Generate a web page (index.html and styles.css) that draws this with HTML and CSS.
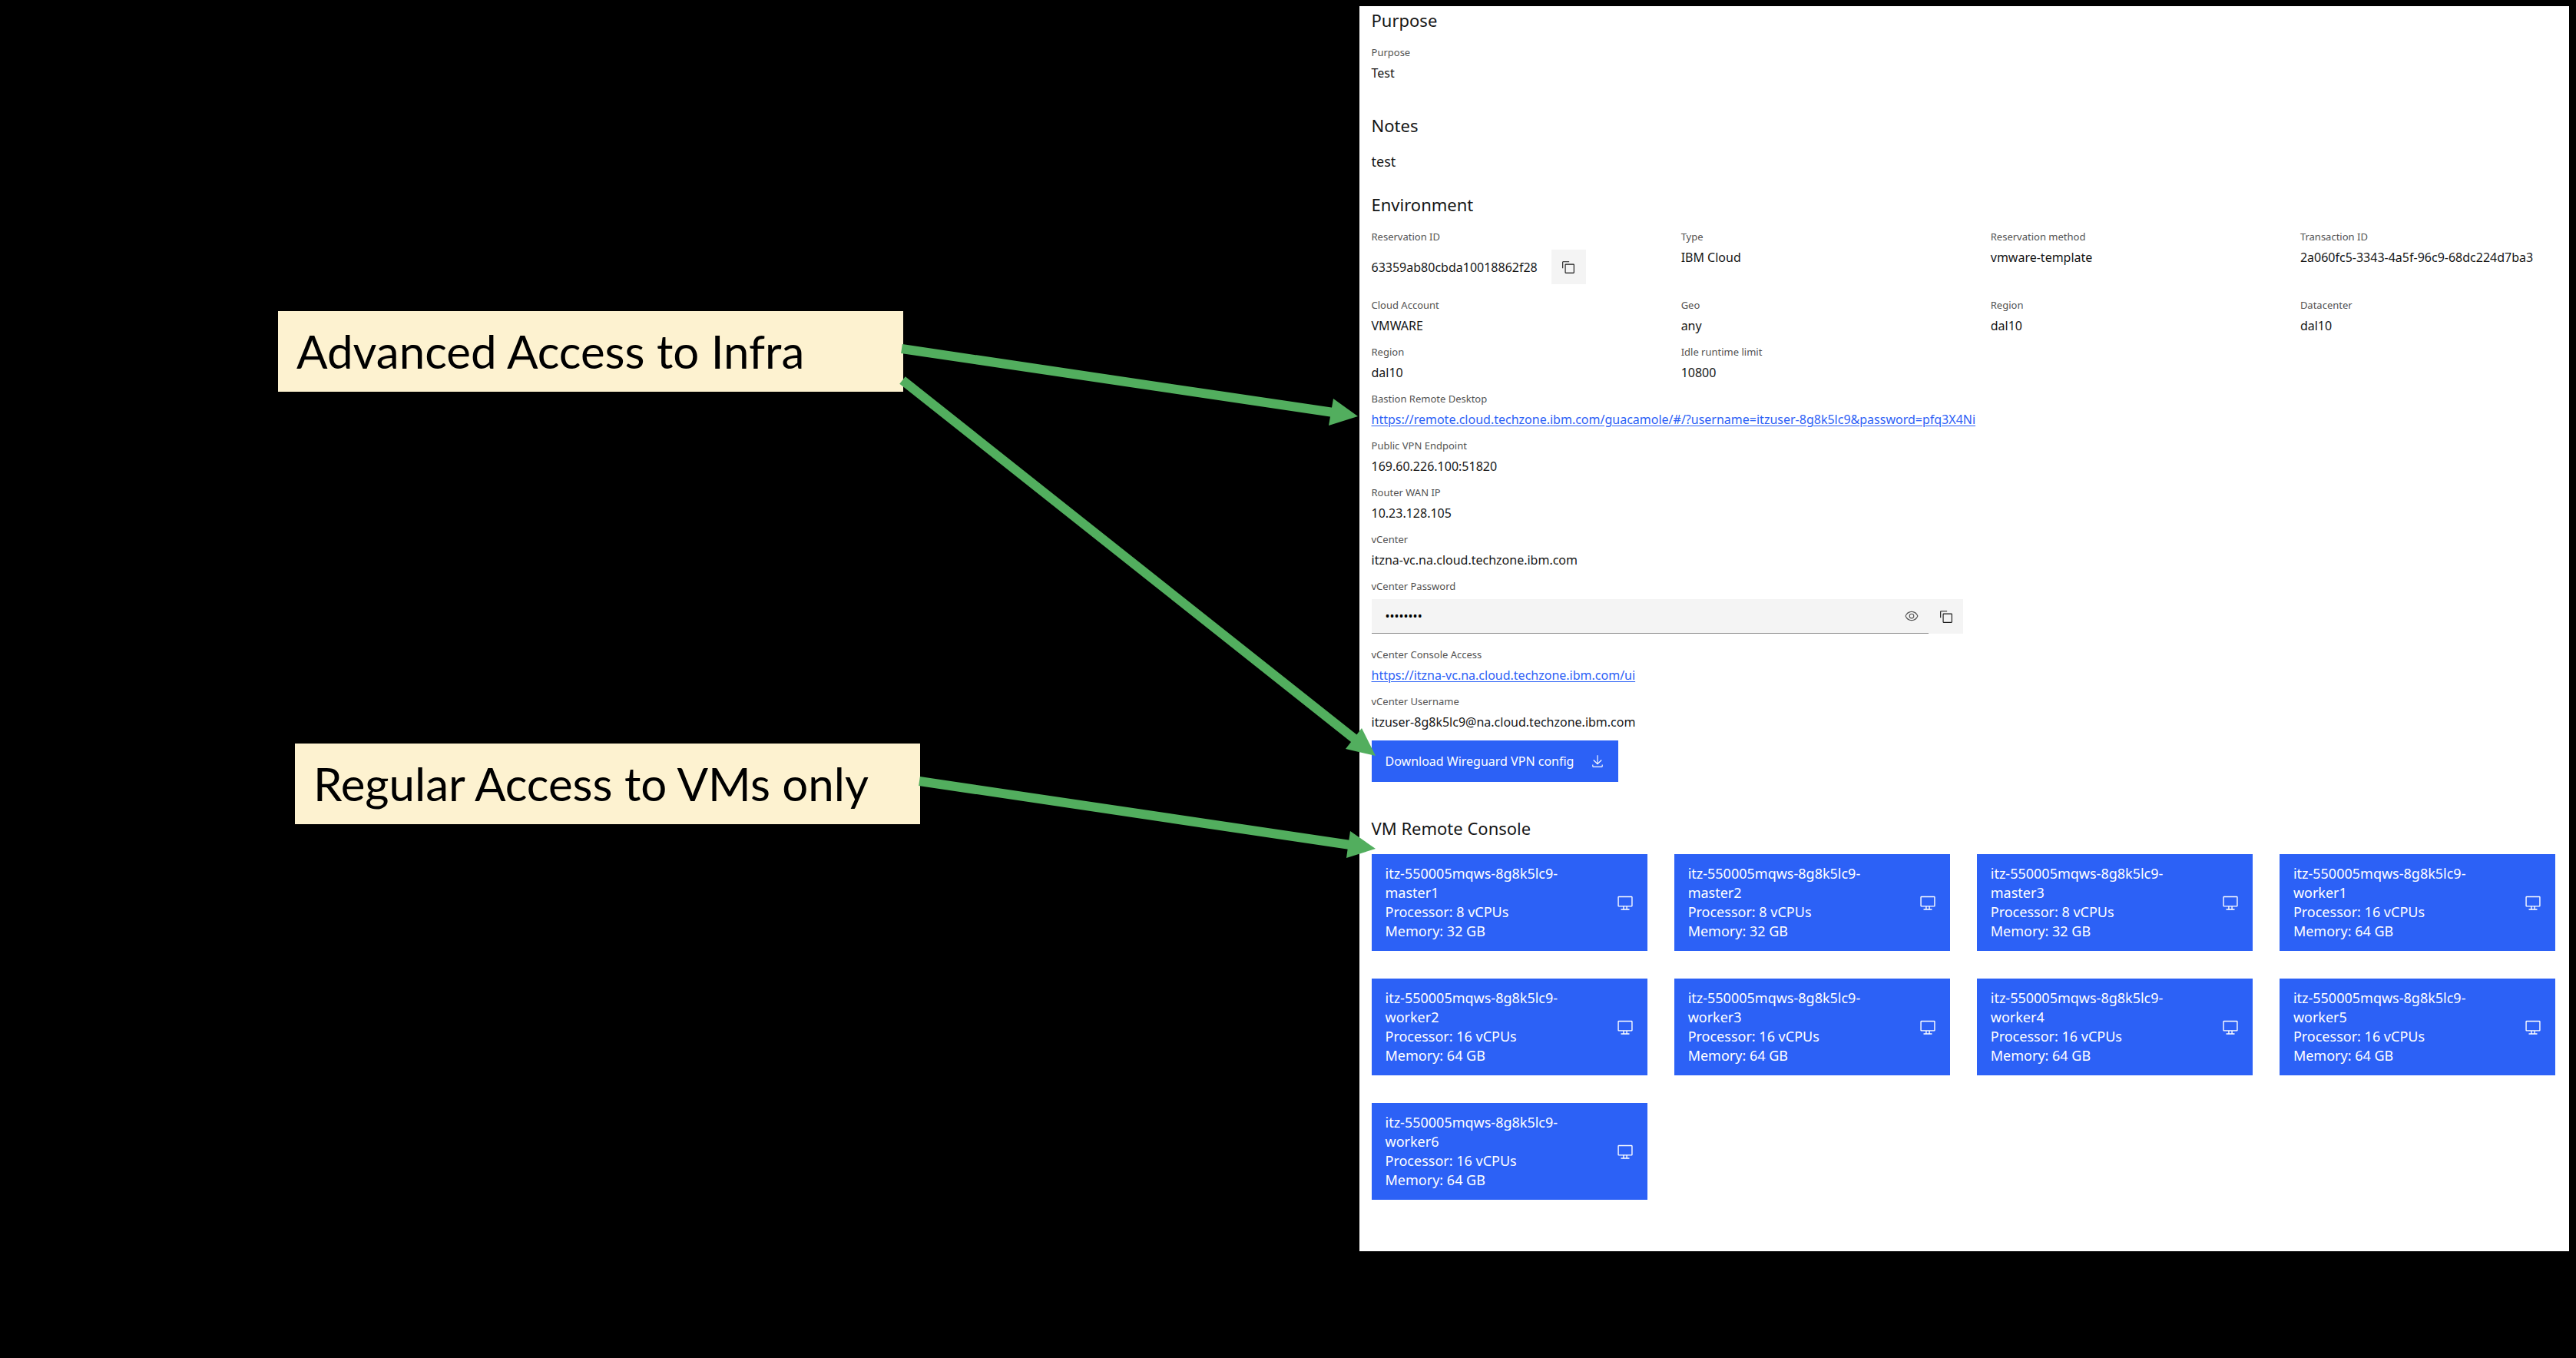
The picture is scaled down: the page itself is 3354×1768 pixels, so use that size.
FILE: index.html
```html
<!DOCTYPE html>
<html lang="en">
<head>
<meta charset="utf-8">
<title>Environment access</title>
<link rel="stylesheet" href="styles.css">
</head>
<body>
<svg class="sprite" aria-hidden="true">
  <symbol id="copy" viewBox="0 0 32 32"><path d="M28,10V28H10V10H28m0-2H10a2,2,0,0,0-2,2V28a2,2,0,0,0,2,2H28a2,2,0,0,0,2-2V10a2,2,0,0,0-2-2Z"/><path d="M4,18H2V4A2,2,0,0,1,4,2H18V4H4Z"/></symbol>
  <symbol id="view" viewBox="0 0 32 32"><path d="M30.94,15.66A16.69,16.69,0,0,0,16,5,16.69,16.69,0,0,0,1.06,15.66a1,1,0,0,0,0,.68A16.69,16.69,0,0,0,16,27,16.69,16.69,0,0,0,30.94,16.34,1,1,0,0,0,30.94,15.66ZM16,25c-5.3,0-10.9-3.93-12.93-9C5.1,10.93,10.7,7,16,7s10.9,3.93,12.93,9C26.9,21.07,21.3,25,16,25Z"/><path d="M16,10a6,6,0,1,0,6,6A6,6,0,0,0,16,10Zm0,10a4,4,0,1,1,4-4A4,4,0,0,1,16,20Z"/></symbol>
  <symbol id="download" viewBox="0 0 32 32"><path d="M26,24v4H6V24H4v4a2,2,0,0,0,2,2H26a2,2,0,0,0,2-2V24Z"/><path d="M26,14l-1.41-1.41L17,20.17V2H15V20.17L7.41,12.59,6,14,16,24,26,14Z"/></symbol>
  <symbol id="screen" viewBox="0 0 32 32"><path d="M28,4H4A2,2,0,0,0,2,6V22a2,2,0,0,0,2,2h8v4H8v2H24V28H20V24h8a2,2,0,0,0,2-2V6A2,2,0,0,0,28,4ZM18,28H14V24h4Zm10-6H4V6H28Z"/></symbol>
</svg>
<main class="slide">
  <aside class="callouts">
    <p class="callout callout-infra">Advanced Access to Infra</p>
    <p class="callout callout-vms">Regular Access to VMs only</p>
  </aside>
  <article class="panel">
    <section class="purpose">
      <h2>Purpose</h2>
      <dl class="details"><div><dt>Purpose</dt><dd>Test</dd></div></dl>
    </section>
    <section class="notes">
      <h2>Notes</h2>
      <p>test</p>
    </section>
    <section class="environment">
      <h2>Environment</h2>
      <dl class="details">
        <div><dt>Reservation ID</dt><dd class="copyable">63359ab80cbda10018862f28<button class="icon-button" type="button" aria-label="Copy reservation ID"><svg class="icon"><use href="#copy"/></svg></button></dd></div>
        <div><dt>Type</dt><dd>IBM Cloud</dd></div>
        <div><dt>Reservation method</dt><dd>vmware-template</dd></div>
        <div><dt>Transaction ID</dt><dd>2a060fc5-3343-4a5f-96c9-68dc224d7ba3</dd></div>
        <div><dt>Cloud Account</dt><dd>VMWARE</dd></div>
        <div><dt>Geo</dt><dd>any</dd></div>
        <div><dt>Region</dt><dd>dal10</dd></div>
        <div><dt>Datacenter</dt><dd>dal10</dd></div>
        <div><dt>Region</dt><dd>dal10</dd></div>
        <div><dt>Idle runtime limit</dt><dd>10800</dd></div>
        <div class="wide"><dt>Bastion Remote Desktop</dt><dd><a href="https://remote.cloud.techzone.ibm.com/guacamole/#/?username=itzuser-8g8k5lc9&amp;password=pfq3X4Ni">https://remote.cloud.techzone.ibm.com/guacamole/#/?username=itzuser-8g8k5lc9&amp;password=pfq3X4Ni</a></dd></div>
        <div class="wide"><dt>Public VPN Endpoint</dt><dd>169.60.226.100:51820</dd></div>
        <div class="wide"><dt>Router WAN IP</dt><dd>10.23.128.105</dd></div>
        <div class="wide"><dt>vCenter</dt><dd>itzna-vc.na.cloud.techzone.ibm.com</dd></div>
        <div class="wide"><dt><label for="vcenter-password">vCenter Password</label></dt><dd class="password"><span class="password-field"><input id="vcenter-password" type="password" value="password" readonly><button class="icon-button" type="button" aria-label="Show password"><svg class="icon"><use href="#view"/></svg></button></span><button class="icon-button" type="button" aria-label="Copy password"><svg class="icon"><use href="#copy"/></svg></button></dd></div>
        <div class="wide"><dt>vCenter Console Access</dt><dd><a href="https://itzna-vc.na.cloud.techzone.ibm.com/ui">https://itzna-vc.na.cloud.techzone.ibm.com/ui</a></dd></div>
        <div class="wide"><dt>vCenter Username</dt><dd>itzuser-8g8k5lc9@na.cloud.techzone.ibm.com</dd></div>
      </dl>
      <button class="download" type="button">Download Wireguard VPN config<svg class="icon"><use href="#download"/></svg></button>
    </section>
    <section class="consoles">
      <h2>VM Remote Console</h2>
      <div class="vm-grid">
        <button class="vm" type="button"><span>itz-550005mqws-8g8k5lc9-<br>master1<br>Processor: 8 vCPUs<br>Memory: 32 GB</span><svg class="icon vm-icon"><use href="#screen"/></svg></button>
        <button class="vm" type="button"><span>itz-550005mqws-8g8k5lc9-<br>master2<br>Processor: 8 vCPUs<br>Memory: 32 GB</span><svg class="icon vm-icon"><use href="#screen"/></svg></button>
        <button class="vm" type="button"><span>itz-550005mqws-8g8k5lc9-<br>master3<br>Processor: 8 vCPUs<br>Memory: 32 GB</span><svg class="icon vm-icon"><use href="#screen"/></svg></button>
        <button class="vm" type="button"><span>itz-550005mqws-8g8k5lc9-<br>worker1<br>Processor: 16 vCPUs<br>Memory: 64 GB</span><svg class="icon vm-icon"><use href="#screen"/></svg></button>
        <button class="vm" type="button"><span>itz-550005mqws-8g8k5lc9-<br>worker2<br>Processor: 16 vCPUs<br>Memory: 64 GB</span><svg class="icon vm-icon"><use href="#screen"/></svg></button>
        <button class="vm" type="button"><span>itz-550005mqws-8g8k5lc9-<br>worker3<br>Processor: 16 vCPUs<br>Memory: 64 GB</span><svg class="icon vm-icon"><use href="#screen"/></svg></button>
        <button class="vm" type="button"><span>itz-550005mqws-8g8k5lc9-<br>worker4<br>Processor: 16 vCPUs<br>Memory: 64 GB</span><svg class="icon vm-icon"><use href="#screen"/></svg></button>
        <button class="vm" type="button"><span>itz-550005mqws-8g8k5lc9-<br>worker5<br>Processor: 16 vCPUs<br>Memory: 64 GB</span><svg class="icon vm-icon"><use href="#screen"/></svg></button>
        <button class="vm" type="button"><span>itz-550005mqws-8g8k5lc9-<br>worker6<br>Processor: 16 vCPUs<br>Memory: 64 GB</span><svg class="icon vm-icon"><use href="#screen"/></svg></button>
      </div>
    </section>
  </article>
  <svg class="arrows" viewBox="0 0 3354 1768" aria-hidden="true">
    <path d="M1174 454 1736 537"/><path class="tip" d="M1736 519 1768 542 1730 554Z"/>
    <path d="M1175 495 1765 963"/><path class="tip" d="M1773 948 1791 984 1752 975Z"/>
    <path d="M1197 1017 1758 1100"/><path class="tip" d="M1758 1082 1791 1105 1753 1117Z"/>
  </svg>
</main>
</body>
</html>
```
FILE: styles.css
```css
* { box-sizing: border-box; }
body { margin: 0; background: #000; color: #161616; font: 16px/20px "Noto Sans", sans-serif; }
h2, p, dl, dd { margin: 0; }
button, input { font: inherit; border: 0; padding: 0; }
.sprite { position: absolute; width: 0; height: 0; }
.slide { position: relative; display: flex; min-height: 100vh; align-items: flex-start; padding: 8px 9px 0 0; }
.callouts { flex: 1; display: flex; flex-direction: column; align-items: flex-start; gap: 458px; padding-top: 397px; }
.callout { width: 46%; padding: 12px 24px; background: #fdf2d0; color: #000; font: 60px/81px Lato, sans-serif; white-space: nowrap; }
.callout-infra { margin-left: 362px; }
.callout-vms { margin-left: 384px; }
.panel { flex: 0 0 47.1%; padding: 6px 18px 67px 16px; background: #fff; }
h2 { font-size: 22px; line-height: 24px; font-weight: 400; }
.purpose { margin-bottom: 46px; }
.details { display: grid; grid-template-columns: repeat(4, minmax(0, 1fr)); column-gap: 71px; row-gap: 14px; margin-top: 20px; }
.notes p { margin: 25px 0 34px; font-size: 18px; line-height: 20px; }
dt { margin-bottom: 7px; color: #525252; font-size: 13px; line-height: 20px; }
.wide { grid-column: 1 / -1; }
.copyable, .password { display: flex; align-items: center; margin-bottom: 3px; }
.copyable { gap: 18px; }
.icon-button { display: grid; place-items: center; flex: none; width: 45px; height: 45px; background: #f4f4f4; color: #161616; }
.icon { width: 18px; height: 18px; fill: currentColor; flex: none; }
a { color: #2c61f6; text-underline-offset: 2px; }
.password { width: 50%; }
.password-field { display: flex; flex: 1; height: 45px; background: #f4f4f4; border-bottom: 1px solid #8d8d8d; }
.password-field input { flex: 1; min-width: 0; padding-left: 18px; background: transparent; }
.password-field .icon-button { height: 44px; background: transparent; color: #525252; }
.download { display: flex; align-items: center; justify-content: space-between; width: 321px; height: 54px; margin-top: 14px; padding: 0 18px; background: #2c61f6; color: #fff; }
.consoles { margin-top: 48px; }
.vm-grid { display: grid; grid-template-columns: repeat(4, minmax(0, 1fr)); gap: 36px 35px; margin-top: 22px; }
.vm { display: flex; align-items: center; justify-content: space-between; padding: 13px 18px; background: #2c61f6; color: #fff; font-size: 18px; line-height: 25px; text-align: left; }
.vm-icon { width: 22px; height: 22px; }
.arrows { position: absolute; top: 0; left: 0; width: 100%; pointer-events: none; fill: none; stroke: #52ae5e; stroke-width: 12; }
.tip { fill: #52ae5e; stroke: none; }
```
